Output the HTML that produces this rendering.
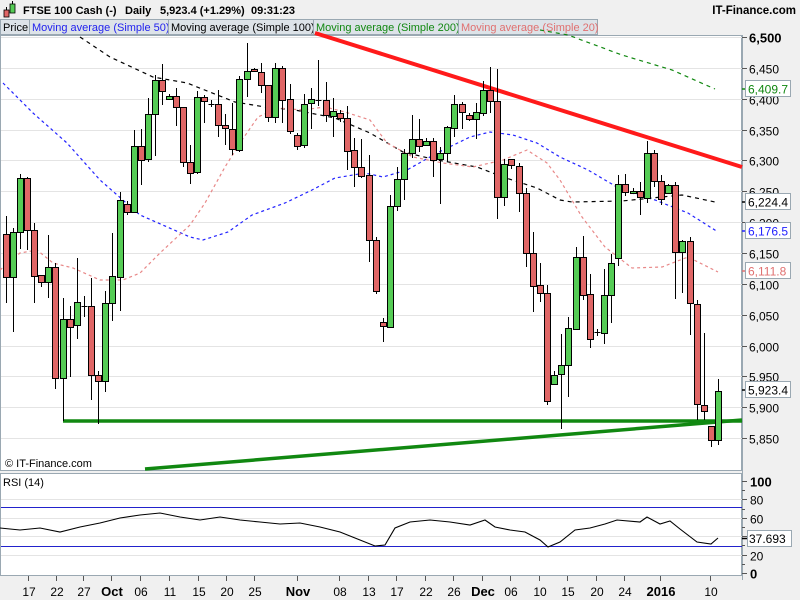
<!DOCTYPE html>
<html><head><meta charset="utf-8">
<style>
html,body{margin:0;padding:0;width:800px;height:600px;overflow:hidden;background:#f0f0f0;font-family:"Liberation Sans",sans-serif;}
svg{position:absolute;left:0;top:0}
</style></head><body>
<svg id="s" width="800" height="600" xmlns="http://www.w3.org/2000/svg" font-family="Liberation Sans, sans-serif">
<rect x="0" y="0" width="800" height="600" fill="#f0f0f0"/>
<rect x="4" y="10" width="5" height="7" fill="#e06666" stroke="#000" stroke-width="0.8"/>
<rect x="10" y="4" width="5" height="9" fill="#55cc55" stroke="#000" stroke-width="0.8"/>
<line x1="6.5" y1="7" x2="6.5" y2="10" stroke="#000"/><line x1="12.5" y1="1" x2="12.5" y2="4" stroke="#000"/>
<g font-size="11" font-weight="bold" fill="#000">
<text x="23" y="14">FTSE 100 Cash (-)</text>
<text x="125" y="14">Daily</text>
<text x="160" y="14">5,923.4 (+1.29%)</text>
<text x="251" y="14">09:31:23</text>
</g>
<text x="796" y="14" font-size="11.5" font-weight="bold" fill="#000" text-anchor="end">IT-Finance.com</text>
<g font-size="11">
<rect x="0.5" y="19.5" width="29" height="15" fill="#dde3e8" stroke="#9aa8b2"/>
<text x="3" y="31" fill="#000">Price</text>
<rect x="29.5" y="19.5" width="139" height="15" fill="#dde3e8" stroke="#9aa8b2"/>
<text x="32" y="31" fill="#2222ee">Moving average (Simple 50)</text>
<rect x="168.5" y="19.5" width="145" height="15" fill="#dde3e8" stroke="#9aa8b2"/>
<text x="171" y="31" fill="#000">Moving average (Simple 100)</text>
<rect x="313.5" y="19.5" width="145" height="15" fill="#dde3e8" stroke="#9aa8b2"/>
<text x="316" y="31" fill="#118811">Moving average (Simple 200)</text>
<rect x="458.5" y="19.5" width="139" height="15" fill="#dde3e8" stroke="#9aa8b2"/>
<text x="461" y="31" fill="#e07070">Moving average (Simple 20)</text>
</g>
<rect x="0.5" y="35.5" width="741" height="435" fill="#fff" stroke="#9aa8b2"/>
<rect x="0.5" y="473.5" width="741" height="102" fill="#fff" stroke="#9aa8b2"/>
<line x1="742.5" y1="35" x2="742.5" y2="580" stroke="#9aa8b2"/>
<g id="g"></g>
</svg>
<script>
var NS="http://www.w3.org/2000/svg",G=document.getElementById('g');
function el(t,a,txt){var e=document.createElementNS(NS,t);for(var k in a)e.setAttribute(k,a[k]);if(txt!=null)e.textContent=txt;G.appendChild(e);return e;}
function Y(p){return 37+(6500-p)/50*30.85;}
for(var p=5850;p<=6500;p+=50){var y=Math.round(Y(p))+0.5;
 el('line',{x1:1,y1:y,x2:742,y2:y,stroke:'#e4e4e4'});
 el('line',{x1:742,y1:y,x2:747,y2:y,stroke:'#555'});
 var s=(p/1000|0)+','+String(p%1000).padStart(3,'0');
 el('text',{x:749,y:y+5,'font-size':p==6500?13:12,'font-weight':p==6500?'bold':'normal',fill:'#000'},s);}
el('line',{x1:315,y1:33,x2:742,y2:167,stroke:'#ff1a1a','stroke-width':4});
el('line',{x1:63,y1:421,x2:742,y2:421,stroke:'#118811','stroke-width':3.5});
el('line',{x1:145,y1:469,x2:742,y2:420,stroke:'#118811','stroke-width':3.5});
function pl(pts,c,d){el('polyline',{points:pts,fill:'none',stroke:c,'stroke-width':1.2,'stroke-dasharray':d});}
pl("80,37 110,57 153,77 187,83 235,102 265,107 295,110 335,118 370,133 403,152 437,160 477,167 503,177 537,188 560,200 572,202 622,201 682,195 715,202",'#000','4,4');
pl("3,83 33,113 67,143 100,180 140,215 190,237 203,240 228,232 252,215 285,203 312,190 335,178 365,173 383,177 407,170 437,153 470,137 490,132 513,135 537,143 560,157 588,170 622,190 655,200 688,213 718,232",'#2222ff','3,3');
pl("0,270 20,253 37,250 53,263 73,268 100,280 123,280 140,273 160,253 190,225 205,203 225,167 242,140 258,117 278,108 302,110 325,107 345,112 370,120 387,143 413,157 443,163 473,167 503,160 527,150 547,163 560,180 582,217 605,247 632,268 662,267 688,257 718,272",'#e88888','3,3');
pl("540,30 568,35 622,55 672,70 715,89",'#118811','4,4');
var C=[[6,234,277,216,303,'r'],[13,232,277,228,332,'g'],[20,178,232,174,249,'g'],[27,178,230,177,250,'r'],[34,230,276,223,303,'r'],[41,275,282,275,287,'r'],[48,267,282,235,298,'g'],[55,267,378,263,389,'r'],[63,319,378,298,421,'g'],[70,319,327,306,377,'r'],[77,302,325,258,339,'g'],[84,306,306,296,317,'d'],[91,306,375,278,400,'r'],[98,375,381,371,424,'r'],[105,303,381,291,392,'g'],[112,276,303,233,321,'g'],[120,200,277,192,311,'g'],[127,204,212,201,215,'r'],[134,146,212,130,212,'g'],[141,146,160,129,185,'r'],[148,114,159,98,162,'g'],[155,80,114,75,156,'g'],[162,80,91,64,105,'r'],[169,96,99,94,99,'g'],[176,96,107,88,126,'r'],[183,107,162,107,167,'r'],[190,162,173,145,184,'r'],[197,97,172,91,174,'g'],[204,97,101,95,123,'r'],[211,104,104,100,107,'d'],[218,104,125,90,137,'r'],[225,125,128,114,145,'r'],[232,129,149,103,155,'r'],[239,79,150,76,152,'g'],[247,71,79,43,97,'g'],[254,69,71,68,72,'r'],[261,72,85,63,93,'r'],[268,85,117,85,122,'r'],[275,68,117,63,123,'g'],[282,68,100,66,123,'r'],[290,99,131,84,134,'r'],[297,135,146,133,150,'r'],[304,104,145,94,148,'g'],[311,99,103,88,129,'g'],[318,100,100,60,106,'d'],[326,100,115,82,122,'r'],[333,111,116,98,137,'g'],[340,113,118,110,122,'r'],[347,118,151,106,170,'r'],[354,150,167,138,187,'r'],[361,167,176,139,178,'r'],[369,175,240,155,262,'r'],[376,240,291,237,294,'r'],[383,322,326,318,342,'r'],[390,206,327,195,327,'g'],[397,179,206,167,211,'g'],[404,153,179,149,200,'g'],[412,139,153,115,158,'g'],[419,139,146,119,152,'r'],[426,141,145,138,145,'g'],[433,141,160,138,177,'r'],[440,153,159,147,204,'g'],[447,127,153,126,162,'g'],[454,104,128,95,137,'g'],[462,104,112,102,129,'r'],[469,115,119,113,121,'r'],[476,112,119,103,139,'g'],[483,90,113,81,116,'g'],[490,90,101,67,113,'r'],[497,101,197,69,219,'r'],[504,164,197,159,206,'g'],[511,159,165,159,169,'r'],[519,166,193,163,212,'r'],[526,193,253,188,267,'r'],[533,253,286,232,312,'r'],[540,285,293,263,302,'r'],[547,293,401,285,405,'r'],[554,375,384,371,385,'g'],[561,365,374,334,429,'g'],[568,328,365,317,397,'g'],[576,257,329,247,330,'g'],[583,257,295,236,300,'r'],[590,294,339,274,348,'r'],[597,332,332,329,336,'d'],[604,295,333,269,344,'g'],[611,263,295,254,323,'g'],[618,184,258,175,266,'g'],[625,184,192,174,196,'r'],[633,191,193,188,194,'g'],[640,191,197,182,215,'r'],[647,153,198,141,203,'g'],[654,153,181,150,187,'r'],[661,181,199,175,205,'r'],[668,185,193,184,193,'g'],[675,185,252,182,299,'r'],[682,241,252,240,293,'g'],[690,241,303,237,335,'r'],[697,304,404,300,420,'r'],[704,405,411,333,420,'r'],[711,426,440,426,447,'r'],[718,391,440,379,445,'g']];
C.forEach(function(c){var x=c[0]+0.5;
 el('line',{x1:x,y1:c[3],x2:x,y2:c[4],stroke:'#000','stroke-width':1});
 if(c[5]=='d'){el('line',{x1:x-3,y1:c[1]+0.5,x2:x+3,y2:c[1]+0.5,stroke:'#000'});}
 else el('rect',{x:c[0]-3+0.5,y:c[1]+0.5,width:6,height:Math.max(1,c[2]-c[1]),fill:c[5]=='g'?'#55cc55':'#e06666',stroke:'#000','stroke-width':1});});
function box(y,t,col){el('line',{x1:742,y1:y,x2:747,y2:y,stroke:col,'stroke-width':1.5});el('rect',{x:745.5,y:y-8.5,width:45,height:16,fill:'#fff',stroke:'#9aa8b2'});el('text',{x:748,y:y+4.5,'font-size':12,fill:col},t);}
box(89,'6,409.7','#118811');box(202,'6,224.4','#000');box(231,'6,176.5','#2222ff');box(271,'6,111.8','#e07070');box(390,'5,923.4','#000');
el('text',{x:5,y:467,'font-size':11,fill:'#000'},'© IT-Finance.com');
function R(v){return 573-v*0.92;}
[20,40,60,80].forEach(function(v){var y=Math.round(R(v))+0.5;el('line',{x1:1,y1:y,x2:742,y2:y,stroke:'#e4e4e4'});});
[0,20,40,60,80,100].forEach(function(v){var y=Math.round(R(v))+0.5;el('line',{x1:742,y1:y,x2:747,y2:y,stroke:'#555'});
 if(v!=40)el('text',{x:750,y:y+5,'font-size':v==100||v==0?13:12,'font-weight':v==100||v==0?'bold':'normal',fill:'#000'},String(v));});
for(var v=10;v<100;v+=20){var y=Math.round(R(v))+0.5;el('line',{x1:742,y1:y,x2:745,y2:y,stroke:'#555'});}
el('line',{x1:1,y1:507.5,x2:742,y2:507.5,stroke:'#2222cc'});
el('line',{x1:1,y1:546.5,x2:742,y2:546.5,stroke:'#2222cc'});
el('polyline',{points:"0,528 20,530 40,528 60,532 80,527 100,523 120,518 140,515 160,513 180,517 200,520 220,517 240,520 260,522 280,524 300,523 320,527 340,532 360,540 375,546 385,545 395,528 410,522 430,520 450,522 470,525 485,520 495,527 510,530 525,532 540,540 548,547 560,542 575,530 590,528 605,524 617,520 640,522 647,517 660,524 670,521 680,529 697,542 711,544 718,538",fill:'none',stroke:'#000','stroke-width':1.1});
el('rect',{x:747.5,y:530.5,width:44,height:16,fill:'#fff',stroke:'#9aa8b2'});
el('text',{x:749,y:543,'font-size':12,fill:'#000'},'37.693');
el('line',{x1:742,y1:538.5,x2:747,y2:538.5,stroke:'#000','stroke-width':1.5});
el('text',{x:3,y:486,'font-size':11,fill:'#000'},'RSI (14)');
var D=[[29,'17'],[57,'22'],[84,'27'],[112,'Oct',1],[141,'06'],[170,'11'],[199,'15'],[227,'20'],[255,'25'],[298,'Nov',1],[340,'08'],[369,'13'],[397,'17'],[426,'22'],[454,'26'],[483,'Dec',1],[511,'06'],[540,'10'],[568,'15'],[597,'20'],[625,'24'],[661,'2016',1],[711,'10']];
D.forEach(function(d){var x=d[0];el('line',{x1:x-0.5,y1:576,x2:x-0.5,y2:581,stroke:'#555'});
 el('text',{x:x,y:596,'font-size':d[2]?13:12,'font-weight':d[2]?'bold':'normal','text-anchor':'middle',fill:'#000'},d[1]);});
</script>
</body></html>
